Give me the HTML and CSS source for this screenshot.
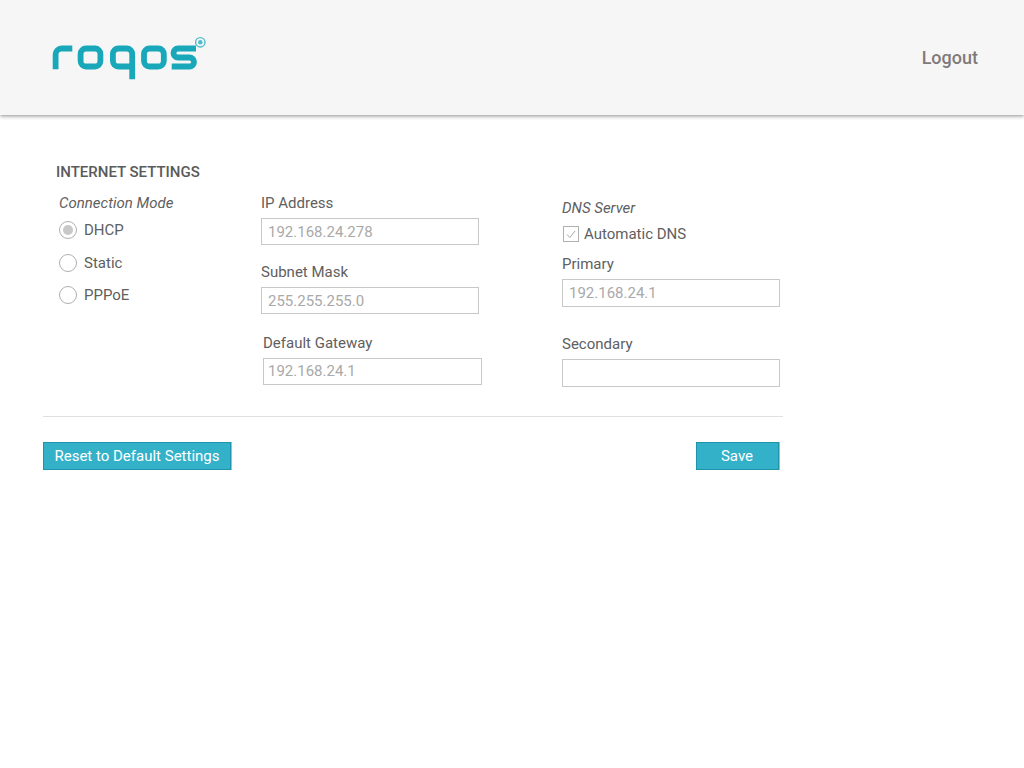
FILE: index.html
```html
<!DOCTYPE html>
<html lang="en">
<head>
<meta charset="utf-8">
<title>Internet Settings</title>
<link rel="stylesheet" href="styles.css">
</head>
<body>
<header class="header">
  <svg class="logo" width="156" height="50" viewBox="0 0 156 50" role="img" aria-label="roqos">
    <g fill="none" stroke="#19a8ba" stroke-width="5.800">
      <path d="M5.600 36.300V21.500a6 6 0 0 1 6-6H22.300"/>
      <rect x="30.600" y="15.500" width="19.800" height="18" rx="5.500"/>
      <path d="M82.200 33.500H68.400a5.500 5.500 0 0 1-5.500-5.500v-7a5.500 5.500 0 0 1 5.500-5.500H76.700a5.500 5.500 0 0 1 5.500 5.500V46.300"/>
      <rect x="94" y="15.500" width="19.800" height="18" rx="5.500"/>
      <path d="M146 15.500H128a4 4 0 0 0 0 9h11.500a4.500 4.500 0 0 1 0 9H121.700"/>
    </g>
    <circle cx="150.300" cy="9.300" r="4.700" fill="none" stroke="#4dbccb" stroke-width="1.400"/>
    <circle cx="150.300" cy="9.300" r="2.200" fill="#4dbccb"/>
  </svg>
  <a class="logout" href="#">Logout</a>
</header>
<main class="main">
  <h1 class="title">INTERNET SETTINGS</h1>
  <div class="columns">
    <section class="col col-mode">
      <div class="legend">Connection Mode</div>
      <label class="radio-row"><span class="radio radio-on"></span>DHCP</label>
      <label class="radio-row"><span class="radio"></span>Static</label>
      <label class="radio-row"><span class="radio"></span>PPPoE</label>
    </section>
    <section class="col col-ip">
      <div class="field">
        <div class="label">IP Address</div>
        <div class="input input-low">192.168.24.278</div>
      </div>
      <div class="field">
        <div class="label">Subnet Mask</div>
        <div class="input input-low">255.255.255.0</div>
      </div>
      <div class="field field-gateway">
        <div class="label">Default Gateway</div>
        <div class="input input-gateway">192.168.24.1</div>
      </div>
    </section>
    <section class="col col-dns">
      <div class="legend">DNS Server</div>
      <label class="check-row">
        <span class="check">
          <svg width="16" height="16" viewBox="0 0 16 16"><path d="M4 8.500l2.800 3L12 5" fill="none" stroke="#a8a8a8" stroke-width="1"/></svg>
        </span>Automatic DNS
      </label>
      <div class="label label-primary">Primary</div>
      <div class="input input-dns">192.168.24.1</div>
      <div class="label label-secondary">Secondary</div>
      <div class="input input-dns"></div>
    </section>
  </div>
  <div class="actions">
    <button class="btn btn-reset" type="button">Reset to Default Settings</button>
    <button class="btn btn-save" type="button">Save</button>
  </div>
</main>
</body>
</html>
```
FILE: styles.css
```css
* { box-sizing: border-box; }
html, body { margin: 0; background: #fff; }
body {
  font-family: Roboto, "Liberation Sans", sans-serif;
  font-size: 15px;
  color: #606060;
}
.header {
  height: 115px;
  background: #f6f6f6;
  box-shadow: 0 1px 4px rgba(0, 0, 0, .45);
  display: flex;
  align-items: flex-start;
  justify-content: space-between;
  padding: 33px 46px 0 50px;
}
.logo { display: block; }
.logout {
  margin-top: 14px;
  font-size: 18px;
  font-weight: 500;
  line-height: 22px;
  color: #7f7a7a;
  text-decoration: none;
}
.main { width: 740px; margin-left: 43px; padding-top: 48px; }
.title {
  margin: 0 0 9px 13px;
  font-size: 15px;
  line-height: 18px;
  font-weight: 500;
  color: #5a5a5a;
}
.columns {
  display: grid;
  grid-template-columns: 202px 301px 221px;
  padding: 0 0 29px 16px;
  border-bottom: 1px solid #e0e0e0;
}
.col { min-width: 0; }
.legend { font-style: italic; line-height: 18px; }
.col-mode { padding-top: 4px; }
.radio-row {
  display: flex;
  align-items: center;
  gap: 7px;
  height: 18px;
  margin-top: 14.500px;
}
.legend + .radio-row { margin-top: 9px; }
.radio {
  width: 18px;
  height: 18px;
  border: 1px solid #b0b0b0;
  border-radius: 50%;
  background: #fff;
  display: flex;
  align-items: center;
  justify-content: center;
}
.radio-on::after {
  content: "";
  width: 10px;
  height: 10px;
  border-radius: 50%;
  background: #c8c8c8;
}
.col-ip { padding-top: 4px; }
.label { line-height: 18px; }
.field { margin-bottom: 18px; }
.field .label { margin-bottom: 6px; }
.field-gateway { margin-left: 2px; margin-bottom: 0; margin-top: 20px; }
.input {
  width: 218px;
  height: 27px;
  border: 1px solid #c8c8c8;
  background: #fff;
  padding-left: 6px;
  line-height: 25px;
  color: #a9a9a9;
}
.input-low { line-height: 27px; }
.input-gateway { width: 219px; padding-left: 4px; }
.input-dns { height: 28px; line-height: 26px; }
.col-dns { padding-top: 9px; }
.check-row {
  display: flex;
  align-items: center;
  gap: 5px;
  height: 18px;
  margin-top: 8px;
  padding-left: 1px;
}
.check {
  width: 16px;
  height: 16px;
  border: 1px solid #b0b0b0;
  display: block;
}
.check svg { display: block; margin: -1px; }
.label-primary { margin-top: 12px; margin-bottom: 6px; }
.label-secondary { margin-top: 28px; margin-bottom: 6px; }
.actions {
  display: flex;
  justify-content: space-between;
  padding: 25px 4px 0 0;
}
.btn {
  height: 28px;
  border: 1px solid #1f93a8;
  border-radius: 0;
  background: #33b1c9;
  box-shadow: 1px 0 0 #7fcbd9;
  color: #fff;
  font: 15px/26px Roboto, "Liberation Sans", sans-serif;
  padding: 0;
}
.btn-reset { width: 188px; }
.btn-save { width: 83px; padding-right: 1px; }
```
